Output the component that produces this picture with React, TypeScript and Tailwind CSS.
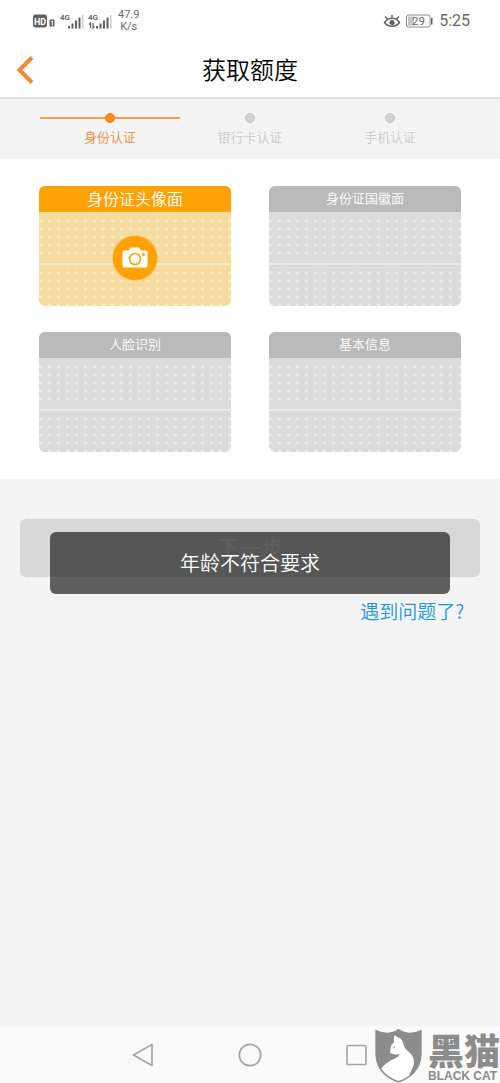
import clsx from "clsx";
import type { ReactNode } from "react";

const steps = [
  { label: "身份认证", active: true },
  { label: "银行卡认证", active: false },
  { label: "手机认证", active: false },
];

const cards = [
  { title: "身份证头像面", active: true },
  { title: "身份证国徽面", active: false },
  { title: "人脸识别", active: false },
  { title: "基本信息", active: false },
];

function Signal({ data }: { data?: boolean }) {
  return (
    <svg width="24" height="18" viewBox="0 0 24 18" fill="#606060">
      <text x="0" y="8" fontSize="8" fontWeight="600" fontFamily="Roboto">
        4G
      </text>
      {data && (
        <path
          d="M1 12.500L2.500 11V16M5 11V16L6.500 14.500"
          fill="none"
          stroke="#606060"
          strokeWidth="1.200"
        />
      )}
      <rect x="8" y="14" width="2" height="2.500" />
      <rect x="11.500" y="11.500" width="2" height="5" />
      <rect x="15" y="8.500" width="2" height="8" />
      <rect x="18.500" y="5.500" width="2" height="11" />
      <rect x="22" y="3" width="1.500" height="13.500" fill="#cfcfcf" />
    </svg>
  );
}

function StatusBar() {
  return (
    <div className="flex h-[42px] items-center justify-between pr-[30px] pl-8 font-[Roboto,sans-serif] font-normal text-[#686868]">
      <div className="flex items-center">
        <svg width="24" height="16" viewBox="0 0 24 16">
          <rect x="1" y="1.500" width="14" height="13" rx="2.500" fill="#606060" />
          <text x="2" y="11.500" fontSize="9" fontWeight="700" fontFamily="Roboto" fill="#fff">
            HD
          </text>
          <path d="M18.500 6.500h3q1 0 1 1v6h-5v-6q0-1 1-1Z" fill="#606060" />
          <path d="M19 9l1.300-1v4.500" fill="none" stroke="#fff" strokeWidth="1" />
        </svg>
        <div className="ml-1 flex gap-1">
          <Signal />
          <Signal data />
        </div>
        <div className="ml-1.5 text-center text-[11px] leading-[12px]">
          47.9
          <br />
          K/s
        </div>
      </div>
      <div className="flex items-center">
        <svg width="18" height="16" viewBox="0 0 18 16" fill="none" stroke="#606060" strokeWidth="1.400">
          <path d="M1.500 9.500C5 4 13 4 16.500 9.500C13 14.500 5 14.500 1.500 9.500Z" />
          <circle cx="9" cy="9.500" r="1.900" fill="#606060" />
          <path d="M9 5.500V2M4.500 6L2 3.500M13.500 6L16 3.500" />
        </svg>
        <svg className="ml-1" width="28" height="16" viewBox="0 0 28 16">
          <rect x="1.500" y="2" width="23.500" height="12" rx="2" fill="#fff" stroke="#8a8a8a" />
          <rect x="3" y="3.500" width="6" height="9" fill="#c4c4c4" />
          <rect x="26" y="5" width="1.500" height="6.500" fill="#606060" />
          <text x="7" y="12" fontSize="11.500" fontFamily="Roboto" fill="#686868">
            29
          </text>
        </svg>
        <span className="ml-1.5 text-base">5:25</span>
      </div>
    </div>
  );
}

function Header() {
  return (
    <header className="grid h-[57px] grid-cols-[1fr_auto_1fr] items-center border-b-2 border-[#dedede] px-4">
      <button type="button" aria-label="返回" className="justify-self-start">
        <svg width="18" height="28" viewBox="0 0 18 28" fill="none" stroke="#f5863a" strokeWidth="4">
          <path d="M16 1.500L3.500 14L16 26.500" />
        </svg>
      </button>
      <h1 className="pb-0.5 text-2xl text-black">获取额度</h1>
    </header>
  );
}

function Steps() {
  return (
    <ol className="grid h-[60px] grid-cols-3 bg-[#f4f4f4] px-10 pt-3.5">
      {steps.map(({ label, active }) => (
        <li key={label} className="flex flex-col items-center">
          <div className="grid w-full place-items-center">
            <span className={clsx("col-start-1 row-start-1 h-0.5 w-full", active && "bg-[#f4a04c]")} />
            <span
              className={clsx(
                "z-10 col-start-1 row-start-1 size-2.5 rounded-full border",
                active ? "border-[#ee8015] bg-[#f78f1a]" : "border-[#c4c4c4] bg-[#d2d2d2]",
              )}
            />
          </div>
          <span className={clsx("mt-1 text-[13px] leading-5", active ? "text-[#e58a3a]" : "text-[#cacaca]")}>
            {label}
          </span>
        </li>
      ))}
    </ol>
  );
}

function Dots({ active, className }: { active: boolean; className: string }) {
  return (
    <div
      className={clsx(
        "w-full bg-size-[9px_8px] bg-position-[-3px_0px]",
        active
          ? "bg-[radial-gradient(circle,#faebc3_1px,transparent_2px)]"
          : "bg-[radial-gradient(circle,#ebebeb_1px,transparent_2px)]",
        className,
      )}
    />
  );
}

function Card({ title, active, children }: { title: string; active: boolean; children?: ReactNode }) {
  return (
    <button
      type="button"
      className={clsx(
        "relative flex h-[120px] flex-col overflow-hidden rounded-md",
        active ? "bg-[#f5dca0]" : "bg-[#dbdbdb]",
      )}
    >
      <span
        className={clsx(
          "h-[26px] w-full leading-6 text-white",
          active ? "bg-[#ffa205] text-base" : "bg-[#bababa] text-[13px]",
        )}
      >
        {title}
      </span>
      <Dots active={active} className="mt-[5px] mb-1.5 h-10" />
      <div className={clsx("h-0.5 w-full", active ? "bg-[#faebc8]" : "bg-[#ebebeb]")} />
      <Dots active={active} className="mt-1 flex-1" />
      {children}
    </button>
  );
}

function CameraBadge() {
  return (
    <span className="absolute inset-x-0 top-6 bottom-0 flex items-center justify-center">
      <span className="flex size-11 items-center justify-center rounded-full bg-[#ffa205] shadow-[0_0_2px_#ffa205]">
        <svg width="26" height="22" viewBox="0 0 26 22">
          <path
            d="M2 3.500H6.500L8.500 .5H17L19 3.500H24Q25.500 3.500 25.500 5V19Q25.500 20.500 24 20.500H2Q.5 20.500 .5 19V5Q.5 3.500 2 3.500Z"
            fill="#fff"
          />
          <circle cx="13" cy="12" r="5.500" fill="none" stroke="#ffa205" strokeWidth="1.600" />
          <circle cx="21.500" cy="7.500" r="1.500" fill="#ffa205" />
        </svg>
      </span>
    </span>
  );
}

function NavBar() {
  return (
    <nav className="mx-auto grid h-[57px] w-[64%] grid-cols-3 place-items-center">
      <button type="button" aria-label="后退">
        <svg width="24" height="24" viewBox="0 0 24 24" fill="none" stroke="#a6a6a6" strokeWidth="1.700" strokeLinejoin="round">
          <path d="M2.500 12L21 1.500V22.500Z" />
        </svg>
      </button>
      <button type="button" aria-label="主页">
        <svg width="24" height="24" viewBox="0 0 24 24" fill="none" stroke="#a6a6a6" strokeWidth="1.700">
          <circle cx="12" cy="12" r="10.700" />
        </svg>
      </button>
      <button type="button" aria-label="最近任务">
        <svg width="24" height="24" viewBox="0 0 24 24" fill="none" stroke="#a6a6a6" strokeWidth="1.700">
          <rect x="2" y="2.500" width="19" height="19" rx="1" />
        </svg>
      </button>
    </nav>
  );
}

function BlackCat() {
  return (
    <div className="absolute right-0 bottom-0 flex items-end gap-1.5 text-[#8c8c8c]">
      <svg width="47" height="54" viewBox="0 0 138 160">
        <path
          d="M2 4C24 15 48 16 69 1C90 16 114 15 136 4V75C136 116 106 146 69 157C31 146 2 116 2 75Z"
          fill="#8c8c8c"
          stroke="#8c8c8c"
          strokeWidth="3"
        />
        <path
          d="M59 18C61 22 65 25 70 26C79 29 83 37 84 47C86 56 93 62 101 69C112 79 117 91 114 106C112 117 103 126 101 138Q87 149 69 154Q36 144 18 118C27 104 41 95 55 89C64 85 71 80 72 74C63 77 51 75 45 71Q42 68 45 64Q43 61 46 57C46 49 49 43 56 39C54 31 55 24 59 18Z"
          fill="#fff"
        />
        <path d="M52 56l7-3" stroke="#8c8c8c" strokeWidth="2" />
      </svg>
      <div className="flex flex-col gap-1">
        <span className="text-4xl leading-8 font-black">黑猫</span>
        <span className="font-['Liberation_Sans',sans-serif] text-xs leading-[14px] font-bold">BLACK CAT</span>
      </div>
    </div>
  );
}

export default function App() {
  return (
    <div className="relative flex min-h-screen flex-col bg-[#fafafa] font-['Noto_Sans_CJK_SC',sans-serif] font-[350]">
      <div className="bg-white">
        <StatusBar />
        <Header />
        <Steps />
        <section className="grid grid-cols-2 gap-x-[38px] gap-y-[26px] px-[39px] py-[27px]">
          {cards.map((card) => (
            <Card key={card.title} {...card}>
              {card.active && <CameraBadge />}
            </Card>
          ))}
        </section>
      </div>
      <main className="flex-1 bg-[#f4f4f4] px-5 pt-10">
        <div className="relative">
          <button
            type="button"
            disabled
            className="flex h-[58px] w-full items-center justify-center rounded-md bg-[#d8d8d8] pb-1 text-[22px] text-[#f5f5f5]"
          >
            下一步
          </button>
          <div
            role="status"
            className="absolute inset-x-[30px] top-[13px] flex h-[62px] items-center justify-center rounded-md bg-[#202020]/70 text-xl text-white"
          >
            年龄不符合要求
          </div>
        </div>
        <div className="mt-5 flex justify-end pr-4">
          <a href="#help" className="text-[19px] leading-7 text-[#1b98d5]">
            遇到问题了?
          </a>
        </div>
      </main>
      <NavBar />
      <BlackCat />
    </div>
  );
}
